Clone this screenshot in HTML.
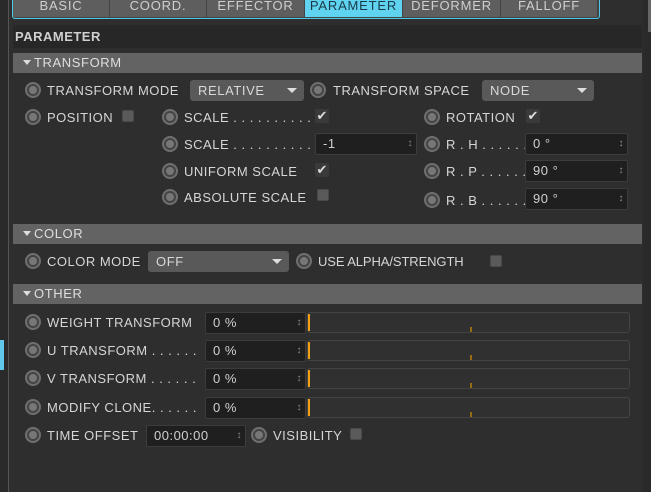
<!DOCTYPE html>
<html><head><style>
*{margin:0;padding:0;box-sizing:border-box}
body{width:651px;height:492px;background:#2e2e2e;position:relative;overflow:hidden;font-family:"Liberation Sans",sans-serif;color:#d6d6d6}
.a{position:absolute}
.t{position:absolute;font-size:13px;letter-spacing:0.5px;white-space:nowrap;line-height:16px;top:0}
.tab{position:absolute;top:0;height:17px;background:#5e5e5e;border-right:1px solid #444;font-size:13px;color:#cfcfcf;text-align:center;line-height:12px;letter-spacing:0.8px}
.hdr{position:absolute;left:13px;width:629px;height:20px;background:#636363;font-size:13px;line-height:20px;padding-left:10px;letter-spacing:0.6px;color:#dedede}
.hdr:before{content:"";display:inline-block;border-left:4px solid transparent;border-right:4px solid transparent;border-top:5px solid #ddd;margin-right:3px;vertical-align:2px}
.r{position:absolute;width:16px;height:16px;border-radius:50%;background:#444;border:2px solid #6f6f6f}
.r:after{content:"";position:absolute;left:2px;top:2px;width:8px;height:8px;border-radius:50%;background:#777}
.cb{position:absolute;width:12px;height:12px;border-radius:2px;background:#5a5a5a;border:1px solid #4a4a4a}
.ck{position:absolute;width:14px;height:14px;border-radius:2px;background:#3a3a3a;color:#ddd;font-size:13px;line-height:14px;text-align:center}
.dd{position:absolute;height:21px;background:#595959;border-radius:3px;font-size:13px;line-height:21px;padding-left:8px;letter-spacing:0.6px;color:#d8d8d8}
.dd:after{content:"";position:absolute;right:7px;top:8px;border-left:5px solid transparent;border-right:5px solid transparent;border-top:5px solid #ddd}
.nf{position:absolute;height:22px;background:#1f1f1f;border:1px solid #3c3c3c;border-radius:2px;font-size:13px;line-height:20px;padding-left:7px;color:#d0d0d0;letter-spacing:0.5px}
.nf:after{content:"\2195";position:absolute;right:3px;top:0;font-size:10px;color:#888}
.tr{position:absolute;left:307px;width:323px;height:21px;border:1px solid #444;border-radius:3px;background:#303030}
.tr:before{content:"";position:absolute;left:0;top:1px;width:2px;height:17px;background:#f0a010}
.tr:after{content:"";position:absolute;left:162px;top:14px;width:2px;height:5px;background:#9a6a10}
</style></head><body>
<div class="a" style="left:0;top:0;width:9px;height:492px;background:#2a2a2a;border-right:1px solid #555"></div>
<div class="a" style="left:0;top:340px;width:4px;height:30px;background:#5fc8ea"></div>
<div class="a" style="left:643px;top:0;width:8px;height:492px;background:#2a2a2a"></div>
<div class="a" style="left:648px;top:0;width:3px;height:32px;background:#666"></div>
<div class="a" style="left:12px;top:0;width:588px;height:19px;border:1px solid #4cc8e6;border-top:none;border-radius:0 0 3px 3px;background:#444"></div>
<div class="tab" style="left:13px;width:97px">BASIC</div>
<div class="tab" style="left:110px;width:97px">COORD.</div>
<div class="tab" style="left:207px;width:98px">EFFECTOR</div>
<div class="tab" style="left:305px;width:98px;background:#5fd3ef;color:#1a3a48">PARAMETER</div>
<div class="tab" style="left:403px;width:98px">DEFORMER</div>
<div class="tab" style="left:501px;width:97px">FALLOFF</div>
<div class="a" style="left:13px;top:25px;width:629px;height:23px;background:#272727"></div>
<div class="t" style="left:15px;top:29px;font-weight:bold;color:#d0d0d0">PARAMETER</div>

<div class="hdr" style="top:53px">TRANSFORM</div>
<div class="r" style="left:25px;top:82px"></div><div class="t" style="left:47px;top:83px">TRANSFORM MODE</div>
<div class="dd" style="left:190px;top:80px;width:114px">RELATIVE</div>
<div class="r" style="left:310px;top:82px"></div><div class="t" style="left:333px;top:83px">TRANSFORM SPACE</div>
<div class="dd" style="left:482px;top:80px;width:112px">NODE</div>

<div class="r" style="left:25px;top:109px"></div><div class="t" style="left:47px;top:110px">POSITION</div><div class="cb" style="left:122px;top:110px"></div>
<div class="r" style="left:162px;top:109px"></div><div class="t" style="left:184px;top:110px">SCALE . . . . . . . . . . .</div><div class="ck" style="left:315px;top:109px">✔</div>
<div class="r" style="left:424px;top:109px"></div><div class="t" style="left:446px;top:110px">ROTATION</div><div class="ck" style="left:526px;top:109px">✔</div>

<div class="r" style="left:162px;top:136px"></div><div class="t" style="left:184px;top:137px">SCALE . . . . . . . . . . .</div>
<div class="nf" style="left:315px;top:133px;width:102px">-1</div>
<div class="r" style="left:424px;top:136px"></div><div class="t" style="left:446px;top:137px">R . H . . . . . .</div>
<div class="nf" style="left:525px;top:133px;width:103px">0 °</div>

<div class="r" style="left:162px;top:163px"></div><div class="t" style="left:184px;top:164px">UNIFORM SCALE</div><div class="ck" style="left:315px;top:163px">✔</div>
<div class="r" style="left:424px;top:163px"></div><div class="t" style="left:446px;top:164px">R . P . . . . . .</div>
<div class="nf" style="left:525px;top:160px;width:103px">90 °</div>

<div class="r" style="left:162px;top:189px"></div><div class="t" style="left:184px;top:190px">ABSOLUTE SCALE</div><div class="cb" style="left:317px;top:189px"></div>
<div class="r" style="left:424px;top:192px"></div><div class="t" style="left:446px;top:193px">R . B . . . . . .</div>
<div class="nf" style="left:525px;top:188px;width:103px">90 °</div>

<div class="hdr" style="top:224px">COLOR</div>
<div class="r" style="left:25px;top:253px"></div><div class="t" style="left:47px;top:254px">COLOR MODE</div>
<div class="dd" style="left:148px;top:251px;width:141px">OFF</div>
<div class="r" style="left:296px;top:253px"></div><div class="t" style="left:318px;top:254px;letter-spacing:-0.1px">USE ALPHA/STRENGTH</div><div class="cb" style="left:490px;top:255px"></div>

<div class="hdr" style="top:284px">OTHER</div>
<div class="r" style="left:25px;top:314px"></div><div class="t" style="left:47px;top:315px">WEIGHT TRANSFORM</div>
<div class="nf" style="left:205px;top:312px;width:101px">0 %</div><div class="tr" style="top:312px"></div>
<div class="r" style="left:25px;top:342px"></div><div class="t" style="left:47px;top:343px">U TRANSFORM . . . . . .</div>
<div class="nf" style="left:205px;top:340px;width:101px">0 %</div><div class="tr" style="top:340px"></div>
<div class="r" style="left:25px;top:370px"></div><div class="t" style="left:47px;top:371px">V TRANSFORM . . . . . .</div>
<div class="nf" style="left:205px;top:368px;width:101px">0 %</div><div class="tr" style="top:368px"></div>
<div class="r" style="left:25px;top:399px"></div><div class="t" style="left:47px;top:400px">MODIFY CLONE. . . . . .</div>
<div class="nf" style="left:205px;top:397px;width:101px">0 %</div><div class="tr" style="top:397px"></div>
<div class="r" style="left:25px;top:427px"></div><div class="t" style="left:47px;top:428px">TIME OFFSET</div>
<div class="nf" style="left:146px;top:425px;width:100px">00:00:00</div>
<div class="r" style="left:251px;top:427px"></div><div class="t" style="left:273px;top:428px">VISIBILITY</div><div class="cb" style="left:350px;top:428px"></div>
</body></html>
